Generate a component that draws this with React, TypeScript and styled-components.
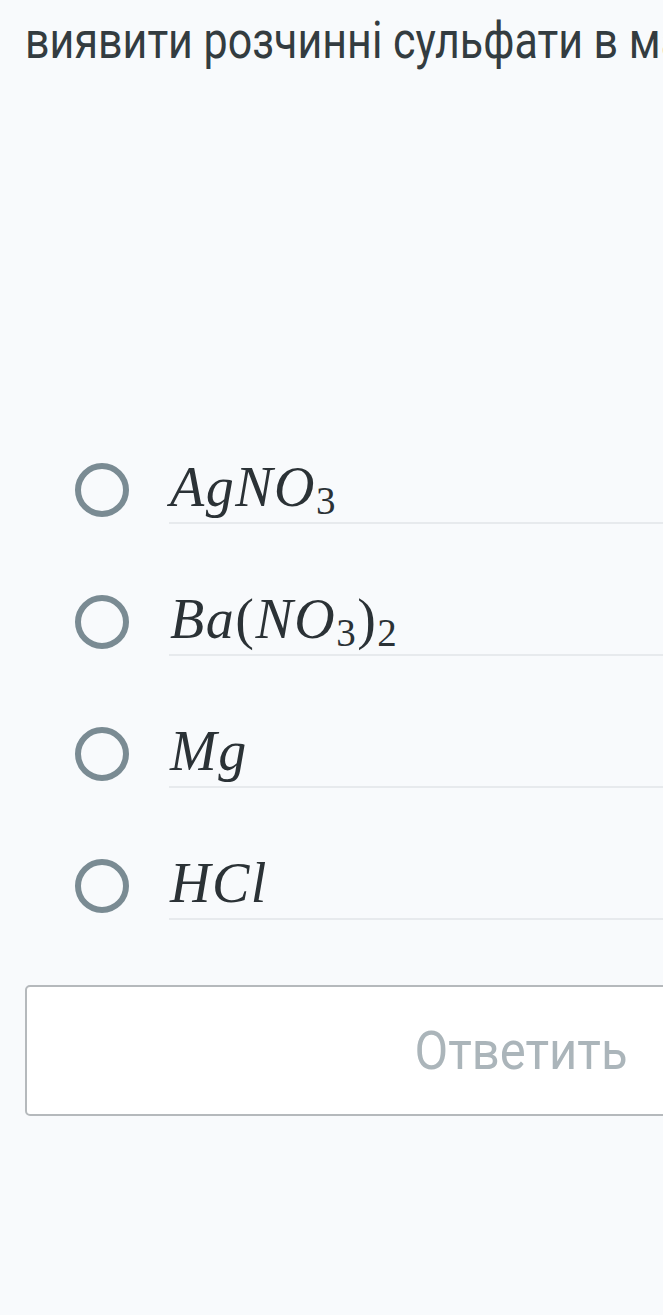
import React from "react";
import styled, { createGlobalStyle } from "styled-components";

const Global = createGlobalStyle`
  html, body {
    margin: 0;
    padding: 0;
    background: #f8fafc;
    overflow: hidden;
  }
  body {
    font-family: Roboto, "Noto Sans", sans-serif;
  }
`;

const Page = styled.div`
  width: 1017px;
  padding: 6px 0 0 25px;
  box-sizing: content-box;
`;

const Question = styled.div`
  font-family: Roboto, "Noto Sans", sans-serif;
  font-size: 43px;
  line-height: 56px;
  color: #333c40;
  white-space: nowrap;
  letter-spacing: 0px;
  transform: scaleY(1.2);
  transform-origin: left top;
`;

const Options = styled.div`
  display: flex;
  flex-direction: column;
  margin-top: 393px;
  padding-left: 49px;
`;

const Option = styled.label`
  display: flex;
  align-items: flex-start;
  height: 132px;
`;

const Radio = styled.span`
  width: 54px;
  height: 54px;
  box-sizing: border-box;
  border: 6px solid #7a8b93;
  border-radius: 50%;
  flex-shrink: 0;
  margin-top: 8px;
  margin-left: 1px;
`;

const Label = styled.div`
  flex: 1;
  margin-left: 40px;
  height: 69px;
  border-bottom: 2px solid #e7eaed;
  display: flex;
  align-items: flex-end;
  padding-bottom: 7px;
  box-sizing: border-box;
`;

const Formula = styled.span`
  font-family: "Liberation Serif", "Times New Roman", serif;
  font-style: italic;
  font-size: 56px;
  line-height: 56px;
  letter-spacing: 1.5px;
  color: #2b3236;
  white-space: nowrap;
  padding-left: 1px;
`;

const Upright = styled.span`
  font-style: normal;
`;

const Sub = styled.span`
  font-style: normal;
  font-size: 39px;
  vertical-align: -8px;
  line-height: 0;
`;

const Button = styled.button`
  display: flex;
  align-items: center;
  justify-content: center;
  margin-top: 2px;
  width: 992px;
  height: 131px;
  background: #ffffff;
  border: 2px solid #b5b9bc;
  border-radius: 5px;
  font-family: Roboto, "Noto Sans", sans-serif;
  font-size: 49px;
  color: #abb5ba;
  padding: 0;
`;

const ButtonText = styled.span`
  display: inline-block;
  transform: scaleY(1.1);
`;

type Part = { t: string; sub?: boolean; up?: boolean };

const options: Part[][] = [
  [{ t: "AgNO" }, { t: "3", sub: true }],
  [{ t: "Ba" }, { t: "(", up: true }, { t: "NO" }, { t: "3", sub: true }, { t: ")", up: true }, { t: "2", sub: true }],
  [{ t: "Mg" }],
  [{ t: "HCl" }],
];

export default function App() {
  return (
    <>
      <Global />
      <Page>
        <Question>виявити розчинні сульфати в малих концентраціях</Question>
        <Options>
          {options.map((parts, i) => (
            <Option key={i}>
              <Radio />
              <Label>
                <Formula>
                  {parts.map((p, j) =>
                    p.sub ? (
                      <Sub key={j}>{p.t}</Sub>
                    ) : p.up ? (
                      <Upright key={j}>{p.t}</Upright>
                    ) : (
                      <React.Fragment key={j}>{p.t}</React.Fragment>
                    )
                  )}
                </Formula>
              </Label>
            </Option>
          ))}
        </Options>
        <Button>
          <ButtonText>Ответить</ButtonText>
        </Button>
      </Page>
    </>
  );
}
